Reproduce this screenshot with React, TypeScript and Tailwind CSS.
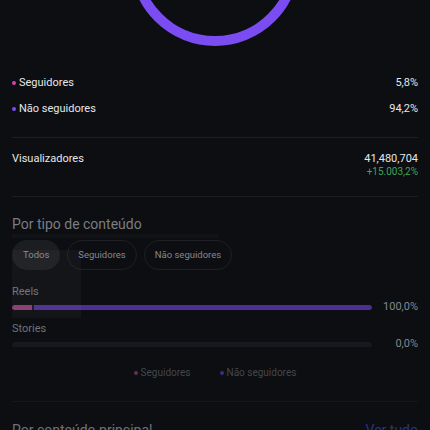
const rows = [
  { label: 'Seguidores', value: '5,8%', dot: 'bg-[#d63fb0]' },
  { label: 'Não seguidores', value: '94,2%', dot: 'bg-[#7b4cf5]' },
];

const Ring = () => (
  <div className="relative h-[46px] overflow-hidden">
    <svg width="430" height="46" viewBox="0 0 430 46" className="absolute left-0 top-0">
      <circle cx="215" cy="-39" r="80" fill="none" stroke="#7a4cf2" strokeWidth="10" />
    </svg>
  </div>
);

const Bar = ({ label, value, pink, purple }: { label: string; value: string; pink: number; purple: number }) => (
  <div className="flex flex-col">
    <span className="text-[11px] leading-[14px] text-[#6f7278]">{label}</span>
    <div className="flex items-center h-[12px] mt-[2px]">
      <div className="w-[360px] h-[5px] rounded-full bg-[#17191e] flex gap-[2px] overflow-hidden">
        {pink > 0 && <div className="h-full bg-[#8c3b72] rounded-l-full" style={{ width: `${pink}px` }} />}
        {purple > 0 && <div className="h-full bg-[#4b2f93] rounded-r-full" style={{ width: `${purple}px` }} />}
      </div>
      <span className="ml-auto text-[11px] text-[#84878c]">{value}</span>
    </div>
  </div>
);

export default function App() {
  return (
    <div className="w-[430px] h-[430px] overflow-hidden bg-[#0c0e12] font-['Roboto',sans-serif]">
      <Ring />
      <div className="px-3 pt-[30px]">
        <div className="flex flex-col gap-[12px]">
          {rows.map((r) => (
            <div key={r.label} className="flex items-center h-[14px] text-[11px] text-[#e6e7e9]">
              <span className={`w-[4px] h-[4px] rounded-full ${r.dot} mr-[3px]`} />
              <span>{r.label}</span>
              <span className="ml-auto">{r.value}</span>
            </div>
          ))}
        </div>

        <div className="h-px bg-[#1d1f24] mt-[21px]" />

        <div className="flex justify-between pt-[14px] pb-[18px]">
          <span className="text-[11px] leading-[14px] text-[#e6e7e9]">Visualizadores</span>
          <div className="flex flex-col items-end">
            <span className="text-[11px] leading-[14px] text-[#e6e7e9]">41,480,704</span>
            <span className="text-[10px] leading-[12px] text-[#3fa55a]">+15.003,2%</span>
          </div>
        </div>

        <div className="h-px bg-[#1a1c21]" />

        <div className="relative mt-[18px]">
          <div className="text-[14px] leading-[18px] text-[#7a7d82]">Por tipo de conteúdo</div>
          <div className="h-[4px] w-[206px] bg-[#111317] mt-[1px]" />
          <div className="absolute left-0 top-[35px] w-[69px] h-[68px] bg-[#ffffff08]" />

          <div className="flex gap-[7px] mt-[2px] text-[9.5px] text-[#85888d]">
            <div className="h-[30px] px-[11px] flex items-center rounded-full bg-[#1b1d21]">Todos</div>
            <div className="h-[30px] px-[10px] flex items-center rounded-full border border-[#1e2025]">Seguidores</div>
            <div className="h-[30px] px-[10px] flex items-center rounded-full border border-[#1e2025]">Não seguidores</div>
          </div>

          <div className="mt-[15px] flex flex-col gap-[9px]">
            <Bar label="Reels" value="100,0%" pink={20} purple={338} />
            <Bar label="Stories" value="0,0%" pink={0} purple={0} />
          </div>

          <div className="flex justify-center gap-[29px] mt-[15px] text-[10px] text-[#44464c]">
            <div className="flex items-center gap-[3px]">
              <span className="w-[4px] h-[4px] rounded-full bg-[#6b2c5c]" />Seguidores
            </div>
            <div className="flex items-center gap-[3px]">
              <span className="w-[4px] h-[4px] rounded-full bg-[#3d2d80]" />Não seguidores
            </div>
          </div>
        </div>

        <div className="h-px bg-[#16181c] mt-[21px]" />

        <div className="flex justify-between mt-[19px]">
          <span className="text-[14px] leading-[18px] text-[#6f7277]">Por conteúdo principal</span>
          <span className="text-[14px] leading-[18px] text-[#27357f]">Ver tudo</span>
        </div>
      </div>
    </div>
  );
}
